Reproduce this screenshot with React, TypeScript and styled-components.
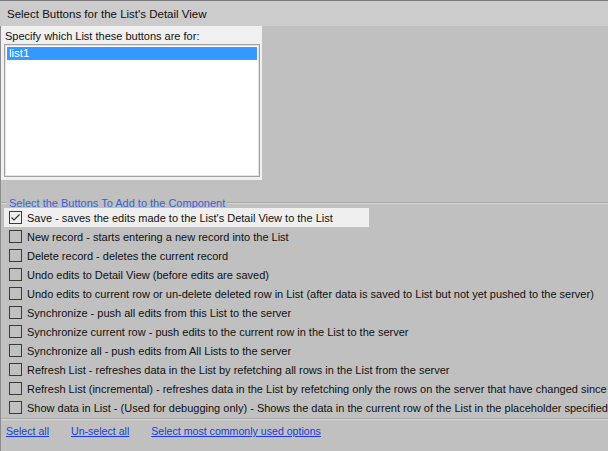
import React from "react";
import styled, { createGlobalStyle } from "styled-components";

const Global = createGlobalStyle`
  html, body { margin: 0; padding: 0; background: #c0c0c0; }
  body { font-family: "Liberation Sans", Arial, sans-serif; }
`;

const Page = styled.div`
  width: 608px;
  height: 451px;
  overflow: hidden;
  background: #c0c0c0;
  display: flex;
  flex-direction: column;
  font-family: "Liberation Sans", Arial, sans-serif;
  color: #111;
`;

const Header = styled.div`
  height: 25px;
  border-top: 1px solid #777;
  background: #cccccc;
  display: flex;
  align-items: center;
  padding-left: 7px;
  font-size: 11.5px;
  white-space: nowrap;
`;

const Body = styled.div`
  flex: 1;
  border-left: 1px solid #8c8c8c;
  display: flex;
  flex-direction: column;
  min-width: 0;
`;

const ListPanel = styled.div`
  width: 261px;
  height: 154px;
  box-sizing: border-box;
  background: #f0f0f0;
  padding: 4px 2px 3px 3px;
  display: flex;
  flex-direction: column;
`;

const Label = styled.div`
  font-size: 11px;
  line-height: 13px;
  padding-left: 1px;
  white-space: nowrap;
`;

const ListBox = styled.div`
  margin-top: 1px;
  flex: 1;
  background: #fff;
  border: 1px solid #a0a0a0;
  box-shadow: inset 0 0 0 1px #e4e4e4;
  padding: 2px;
`;

const ListItem = styled.div<{ $selected?: boolean }>`
  height: 13px;
  box-sizing: border-box;
  background: ${(p) => (p.$selected ? "#3399ff" : "transparent")};
  color: ${(p) => (p.$selected ? "#fff" : "#111")};
  border: 1px dotted ${(p) => (p.$selected ? "#e07a1f" : "transparent")};
  font-size: 11.5px;
  line-height: 11px;
  padding-left: 1px;
`;

const Group = styled.div`
  margin-top: 17px;
  display: flex;
  flex-direction: column;
  border-bottom: 1px solid #a8a8a8;
  box-shadow: 0 1px 0 #d6d6d6;
`;

const LegendRow = styled.div`
  display: flex;
  align-items: center;
  height: 11px;
`;

const LegendLine = styled.div<{ $grow?: boolean }>`
  height: 1px;
  background: #a8a8a8;
  box-shadow: 0 1px 0 #d6d6d6;
  width: ${(p) => (p.$grow ? "auto" : "6px")};
  flex: ${(p) => (p.$grow ? 1 : "none")};
`;

const Legend = styled.span`
  color: #3a62d6;
  font-size: 11px;
  padding: 0 2px;
  white-space: nowrap;
`;

const Rows = styled.div`
  display: flex;
  flex-direction: column;
  padding-bottom: 1px;
  overflow: hidden;
`;

const Row = styled.label<{ $highlight?: boolean }>`
  height: 19px;
  display: flex;
  align-items: center;
  margin-left: 3px;
  padding-left: 5px;
  width: ${(p) => (p.$highlight ? "365px" : "auto")};
  box-sizing: border-box;
  background: ${(p) => (p.$highlight ? "#efefef" : "transparent")};
  font-size: 11px;
  white-space: nowrap;
`;

const Box = styled.span`
  width: 13px;
  height: 13px;
  box-sizing: border-box;
  border: 1px solid #3a3a3a;
  flex: none;
  margin-right: 5px;
  display: flex;
  align-items: center;
  justify-content: center;
`;

const Links = styled.div`
  display: flex;
  align-items: center;
  height: 22px;
  margin-top: 1px;
  padding-left: 5px;
  gap: 22px;
`;

const Link = styled.a`
  color: #1a3ae6;
  text-decoration: underline;
  font-size: 10.6px;
  cursor: pointer;
`;

const items: { text: string; checked?: boolean }[] = [
  { text: "Save - saves the edits made to the List's Detail View to the List", checked: true },
  { text: "New record - starts entering a new record into the List" },
  { text: "Delete record - deletes the current record" },
  { text: "Undo edits to Detail View (before edits are saved)" },
  { text: "Undo edits to current row or un-delete deleted row in List (after data is saved to List but not yet pushed to the server)" },
  { text: "Synchronize - push all edits from this List to the server" },
  { text: "Synchronize current row - push edits to the current row in the List to the server" },
  { text: "Synchronize all - push edits from All Lists to the server" },
  { text: "Refresh List - refreshes data in the List by refetching all rows in the List from the server" },
  { text: "Refresh List (incremental) - refreshes data in the List by refetching only the rows on the server that have changed since the last refresh" },
  { text: "Show data in List - (Used for debugging only) - Shows the data in the current row of the List in the placeholder specified in the component" },
];

const Check = () => (
  <svg width="11" height="11" viewBox="0 0 11 11">
    <polyline points="1.5,5.5 4,8 9.5,2.5" fill="none" stroke="#333" strokeWidth="1.2" />
  </svg>
);

export default function App() {
  return (
    <Page>
      <Global />
      <Header>Select Buttons for the List's Detail View</Header>
      <Body>
        <ListPanel>
          <Label>Specify which List these buttons are for:</Label>
          <ListBox>
            <ListItem $selected>list1</ListItem>
          </ListBox>
        </ListPanel>
        <Group>
          <LegendRow>
            <LegendLine />
            <Legend>Select the Buttons To Add to the Component</Legend>
            <LegendLine $grow />
          </LegendRow>
          <Rows>
            {items.map((it, i) => (
              <Row key={i} $highlight={i === 0}>
                <Box>{it.checked && <Check />}</Box>
                {it.text}
              </Row>
            ))}
          </Rows>
        </Group>
        <Links>
          <Link>Select all</Link>
          <Link>Un-select all</Link>
          <Link>Select most commonly used options</Link>
        </Links>
      </Body>
    </Page>
  );
}
